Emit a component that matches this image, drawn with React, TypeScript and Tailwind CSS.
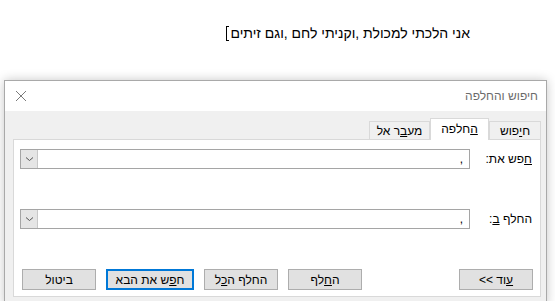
import React from "react";

const font = { fontFamily: '"Liberation Sans", "DejaVu Sans", sans-serif' };

function U({ children }: { children: React.ReactNode }) {
  return <span className="underline underline-offset-[1px]">{children}</span>;
}

function Combo() {
  return (
    <div className="flex h-[20px] flex-1 items-center border border-[#a5a5a5] bg-white" dir="ltr">
      <div className="flex h-full w-[17px] items-center justify-center border-r border-[#c8c8c8] bg-[#e5e5e5]">
        <svg width="9" height="6" viewBox="0 0 9 6" fill="none">
          <path d="M1 1.5 L4.5 4.5 L8 1.5" stroke="#555" strokeWidth="1" />
        </svg>
      </div>
      <div className="flex-1" />
      <span className="pr-[6px] text-[12px] leading-none text-black">,</span>
    </div>
  );
}

function Btn({ children, primary, className = "" }: { children: React.ReactNode; primary?: boolean; className?: string }) {
  return (
    <button
      className={
        "flex h-[21px] items-center justify-center bg-[#e1e1e1] text-[12px] text-black " +
        (primary ? "border-2 border-[#0078d7] " : "border border-[#adadad] ") +
        className
      }
    >
      {children}
    </button>
  );
}

export default function App() {
  return (
    <div className="relative h-[301px] w-[555px] overflow-hidden bg-white" style={font}>
      <div className="flex h-[80px] items-start justify-end pr-[85px] pt-[25px]" dir="ltr">
        <div className="flex items-center gap-[1px]">
          <span className="h-[15px] w-[3px] border-y border-l border-black" />
          <span className="text-[14px] leading-[17px] text-black" dir="rtl">
            אני הלכתי למכולת ,וקניתי לחם ,וגם זיתים
          </span>
        </div>
      </div>

      <div className="ml-[4px] mr-[8px] border border-[#a9a9a9] shadow-[0_0_10px_rgba(0,0,0,0.22)]">
        <div className="flex h-[30px] items-center justify-between bg-white pl-[10px] pr-[8px]">
          <svg width="12" height="12" viewBox="0 0 12 12">
            <path d="M1 1 L11 11 M11 1 L1 11" stroke="#7a7a7a" strokeWidth="1" />
          </svg>
          <span className="text-[12px] text-[#6b6b6b]" dir="rtl">חיפוש והחלפה</span>
        </div>

        <div className="bg-[#f0f0f0] pb-[8px] pl-[8px] pr-[5px]">
          <div className="flex h-[28px] items-end" dir="rtl">
            <div className="flex h-[18px] w-[52px] items-center justify-center border border-b-0 border-[#d9d9d9] text-[12px] text-black">
              ח<U>י</U>פוש
            </div>
            <div className="relative z-10 -mb-px flex h-[22px] w-[59px] items-center justify-center border border-b-0 border-[#d9d9d9] bg-white pb-[2px] text-[12px] text-black">
              <U>ה</U>חלפה
            </div>
            <div className="flex h-[18px] w-[61px] items-center justify-center border border-b-0 border-[#d9d9d9] text-[12px] text-black">
              מע<U>ב</U>ר אל
            </div>
          </div>

          <div className="flex h-[158px] flex-col border border-[#d9d9d9] bg-white pt-[9px]" dir="rtl">
            <div className="flex items-center pl-[6px] pr-[8px]">
              <span className="w-[62px] text-[12px] text-black">
                <U>ח</U>פש את:
              </span>
              <Combo />
            </div>
            <div className="mt-[40px] flex items-center pl-[6px] pr-[8px]">
              <span className="w-[62px] text-[12px] text-black">
                החלף <U>ב</U>:
              </span>
              <Combo />
            </div>
            <div className="mt-[40px] flex items-center pr-[7px]">
              <Btn className="w-[74px]">
                <U>ע</U>וד &gt;&gt;
              </Btn>
              <Btn className="mr-[97px] w-[74px]">
                ה<U>ח</U>לף
              </Btn>
              <Btn className="mr-[10px] w-[74px]">
                החלף ה<U>כ</U>ל
              </Btn>
              <Btn primary className="mr-[10px] w-[88px]">
                ח<U>פ</U>ש את הבא
              </Btn>
              <Btn className="mr-[10px] w-[74px]">ביטול</Btn>
            </div>
          </div>
        </div>
      </div>
    </div>
  );
}
